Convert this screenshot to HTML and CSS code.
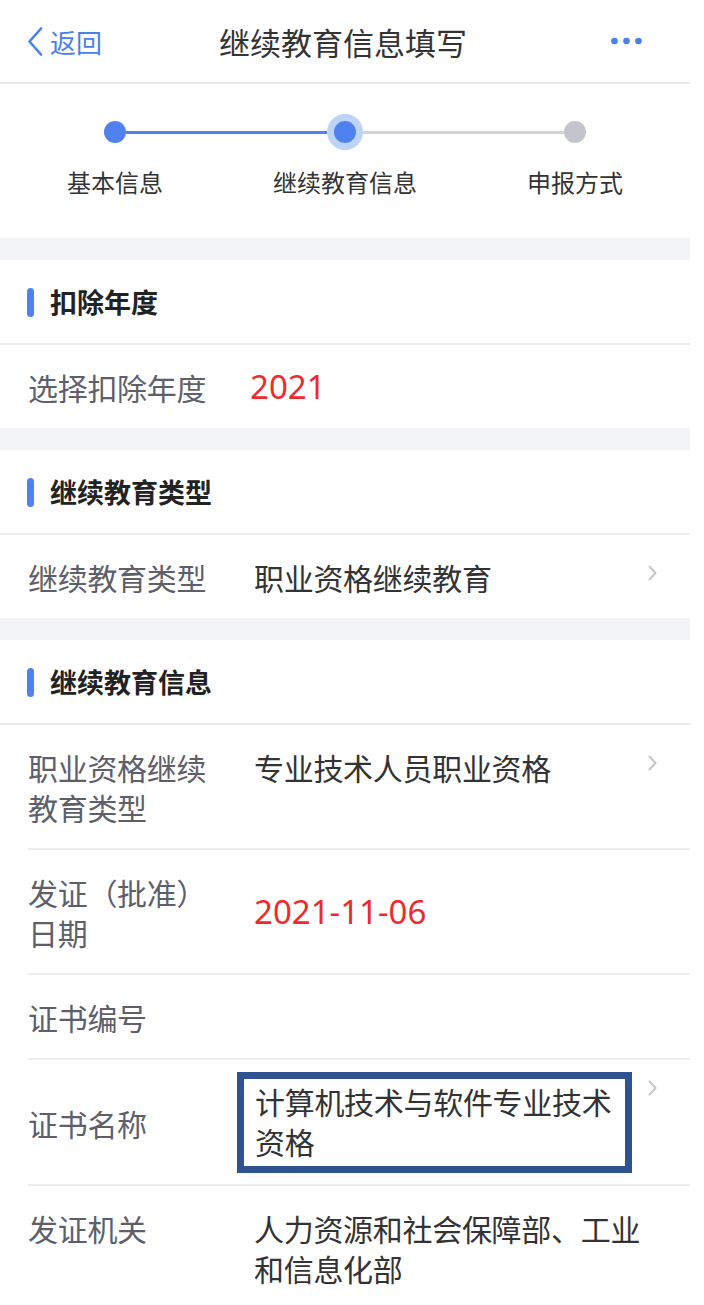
FILE: index.html
```html
<!DOCTYPE html>
<html lang="zh-CN">
<head>
    <meta charset="UTF-8">
    <meta name="viewport" content="width=device-width, initial-scale=1.0">
    <title>继续教育信息填写</title>
    <link rel="stylesheet" href="styles.css">
</head>
<body>
    <div class="page">
        <!-- Top navigation -->
        <div class="nav">
            <div class="nav-back">
                <svg width="16" height="29" viewBox="0 0 16 29">
                    <polyline points="14,1.5 2.5,14.5 14,27.5" fill="none" stroke="#4a80ea" stroke-width="2.6" stroke-linecap="round" stroke-linejoin="round"/>
                </svg>
                <span>返回</span>
            </div>
            <div class="nav-title">继续教育信息填写</div>
            <div class="nav-more">
                <svg width="32" height="8" viewBox="0 0 32 8">
                    <circle cx="3.5" cy="4" r="3.3" fill="#4a80ea"/>
                    <circle cx="15.5" cy="4" r="3.3" fill="#4a80ea"/>
                    <circle cx="27.5" cy="4" r="3.3" fill="#4a80ea"/>
                </svg>
            </div>
        </div>

        <!-- Steps -->
        <div class="steps">
            <div class="track">
                <span class="dot"></span>
                <span class="line done"></span>
                <span class="dot current"></span>
                <span class="line"></span>
                <span class="dot todo"></span>
            </div>
            <div class="step-labels">
                <span>基本信息</span>
                <span>继续教育信息</span>
                <span>申报方式</span>
            </div>
        </div>

        <!-- 扣除年度 -->
        <div class="section">
            <div class="section-title"><span class="bar"></span>扣除年度</div>
            <div class="row">
                <div class="label">选择扣除年度</div>
                <div class="value edit year">2021</div>
            </div>
        </div>

        <!-- 继续教育类型 -->
        <div class="section">
            <div class="section-title"><span class="bar"></span>继续教育类型</div>
            <div class="row">
                <div class="label">继续教育类型</div>
                <div class="value">职业资格继续教育</div>
                <div class="arrow">
                    <svg width="9" height="16" viewBox="0 0 9 16"><polyline points="1.5,1.5 7.5,8 1.5,14.5" fill="none" stroke="#c7c7cc" stroke-width="2" stroke-linecap="round" stroke-linejoin="round"/></svg>
                </div>
            </div>
        </div>

        <!-- 继续教育信息 -->
        <div class="section">
            <div class="section-title"><span class="bar"></span>继续教育信息</div>
            <div class="row">
                <div class="label">职业资格继续教育类型</div>
                <div class="value">专业技术人员职业资格</div>
                <div class="arrow">
                    <svg width="9" height="16" viewBox="0 0 9 16"><polyline points="1.5,1.5 7.5,8 1.5,14.5" fill="none" stroke="#c7c7cc" stroke-width="2" stroke-linecap="round" stroke-linejoin="round"/></svg>
                </div>
            </div>
            <div class="row middle">
                <div class="label">发证（批准）日期</div>
                <div class="value edit">2021-11-06</div>
            </div>
            <div class="row">
                <div class="label">证书编号</div>
                <div class="value"></div>
            </div>
            <div class="row middle boxed">
                <div class="label">证书名称</div>
                <div class="value">
                    <div class="mark">计算机技术与软件专业技术资格</div>
                </div>
                <div class="arrow">
                    <svg width="9" height="16" viewBox="0 0 9 16"><polyline points="1.5,1.5 7.5,8 1.5,14.5" fill="none" stroke="#c7c7cc" stroke-width="2" stroke-linecap="round" stroke-linejoin="round"/></svg>
                </div>
            </div>
            <div class="row">
                <div class="label">发证机关</div>
                <div class="value">人力资源和社会保障部、工业和信息化部</div>
            </div>
        </div>
    </div>
</body>
</html>
```

FILE: styles.css
```css
/* Page base */
body {
    margin: 0;
    padding: 0;
    background-color: #fff;
    font-family: "Noto Sans CJK SC", sans-serif;
    color: #333;
}
.page {
    width: 690px;
    background-color: #f3f4f8;
}

/* Navigation bar */
.nav {
    display: grid;
    grid-template-columns: 1fr auto 1fr;
    align-items: center;
    height: 82px;
    background-color: #fff;
    border-bottom: 2px solid #e6e6eb;
}
.nav-back {
    display: flex;
    align-items: center;
    gap: 7px;
    padding-left: 27px;
    color: #4a80ea;
    font-size: 26px;
}
.nav-back svg {
    display: block;
}
.nav-title {
    font-size: 31px;
    color: #333;
    margin-right: 4px;
}
.nav-more {
    display: flex;
    justify-content: flex-end;
    padding-right: 47px;
}
.nav-more svg {
    display: block;
}

/* Steps */
.steps {
    background-color: #fff;
    padding: 30px 0 39px;
}
.track {
    display: flex;
    align-items: center;
    margin: 0 104px;
    height: 36px;
}
.dot {
    width: 22px;
    height: 22px;
    border-radius: 50%;
    background-color: #4f82ef;
    box-sizing: border-box;
}
.dot.current {
    width: 36px;
    height: 36px;
    border: 7px solid #bdd4f7;
}
.dot.todo {
    background-color: #c4c4cc;
}
.line {
    flex: 1;
    height: 3px;
    background-color: #d3d3da;
}
.line.done {
    background-color: #4f82ef;
}
.step-labels {
    display: grid;
    grid-template-columns: 1fr 1fr 1fr;
    margin-top: 15px;
    text-align: center;
    font-size: 24px;
    line-height: 34px;
    color: #333;
}

/* Sections */
.section {
    margin-top: 22px;
    background-color: #fff;
}
.section-title {
    display: flex;
    align-items: center;
    padding: 22px 0 21px 27px;
    font-size: 27px;
    line-height: 40px;
    font-weight: 700;
    color: #222;
    border-bottom: 2px solid #ededf0;
}
.bar {
    width: 7px;
    height: 29px;
    border-radius: 4px;
    background-color: #4f82ef;
    margin-right: 16px;
}

/* Rows */
.row {
    display: flex;
    align-items: flex-start;
    margin-left: 28px;
    padding: 22px 32px 21px 0;
    font-size: 30px;
    line-height: 40px;
    letter-spacing: -0.3px;
}
.row + .row {
    border-top: 2px solid #ededf0;
}
.row.middle {
    align-items: center;
}
.row.boxed {
    padding-top: 12px;
    padding-bottom: 11px;
}
.label {
    width: 182px;
    flex-shrink: 0;
    margin-right: 44px;
    color: #5d606a;
}
.value {
    flex: 1;
    min-height: 40px;
    color: #333;
}
.value.edit {
    font-family: "Noto Sans", sans-serif;
    font-size: 33px;
    letter-spacing: 0;
    color: #ee2a2c;
}
.value.year {
    margin-left: -4px;
}
.mark {
    width: 395px;
    box-sizing: border-box;
    margin-left: -17px;
    padding: 2px 10px 5px 11px;
    border: 7px solid #2f5290;
}
.arrow {
    align-self: flex-start;
    width: 10px;
    margin-left: 6px;
}
.arrow svg {
    display: block;
    margin-top: 8px;
}
```
